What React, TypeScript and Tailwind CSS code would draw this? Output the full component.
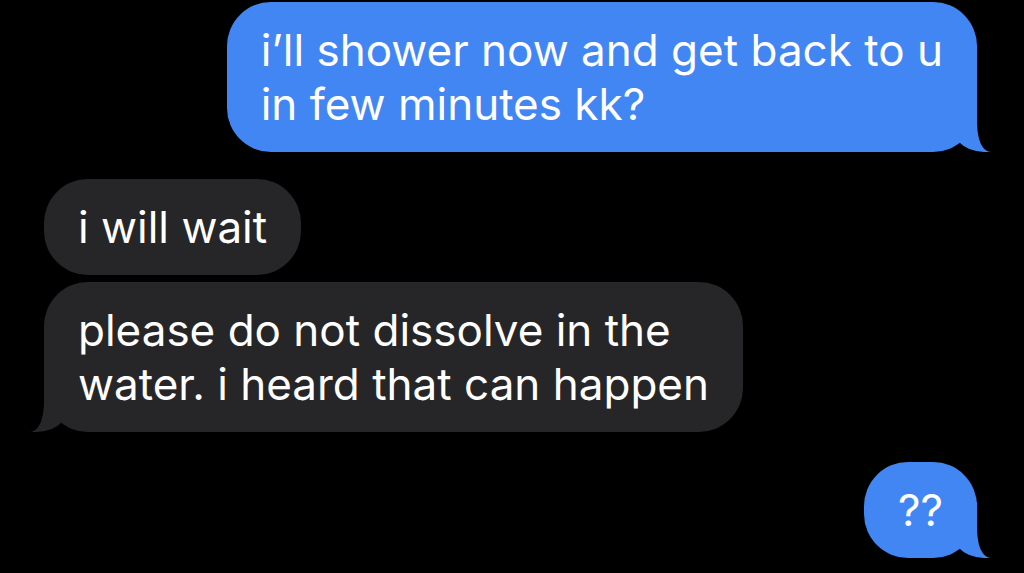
import React from 'react';

type Side = 'left' | 'right';

const Tail: React.FC<{ side: Side; color: string }> = ({ side, color }) => (
  <svg
    width="54"
    height="56"
    viewBox="0 0 54 56"
    className={
      side === 'right'
        ? 'absolute bottom-0 right-[-14px]'
        : 'absolute bottom-0 left-[-14px] -scale-x-100'
    }
  >
    <path d="M40 0 L40 24 C40 44 45 55 54 56 Q32 57 22 46 L10 30 L10 0 Z" fill={color} />
  </svg>
);

interface BubbleProps {
  side: Side;
  tail?: boolean;
  children: React.ReactNode;
}

const Bubble: React.FC<BubbleProps> = ({ side, tail, children }) => {
  const blue = side === 'right';
  const color = blue ? '#4286f4' : '#262629';
  return (
    <div
      className={`relative rounded-[44px] px-[34px] py-[21px] text-white whitespace-nowrap ${
        blue ? 'bg-[#4286f4]' : 'bg-[#262629]'
      }`}
    >
      {tail && <Tail side={side} color={color} />}
      <span className="relative">{children}</span>
    </div>
  );
};

export default function App() {
  return (
    <div className="w-[1024px] h-[573px] overflow-hidden bg-black flex flex-col pt-[2px] pl-[44px] pr-[47px] font-['Inter','Liberation_Sans',sans-serif] text-[44px] leading-[54px]">
      <div className="flex justify-end">
        <Bubble side="right" tail>
          i’ll shower now and get back to u
          <br />
          in few minutes kk?
        </Bubble>
      </div>

      <div className="flex mt-[27px]">
        <Bubble side="left">i will wait</Bubble>
      </div>

      <div className="flex mt-[7px]">
        <Bubble side="left" tail>
          please do not dissolve in the
          <br />
          water. i heard that can happen
        </Bubble>
      </div>

      <div className="flex justify-end mt-[30px]">
        <Bubble side="right" tail>
          ??
        </Bubble>
      </div>
    </div>
  );
}
